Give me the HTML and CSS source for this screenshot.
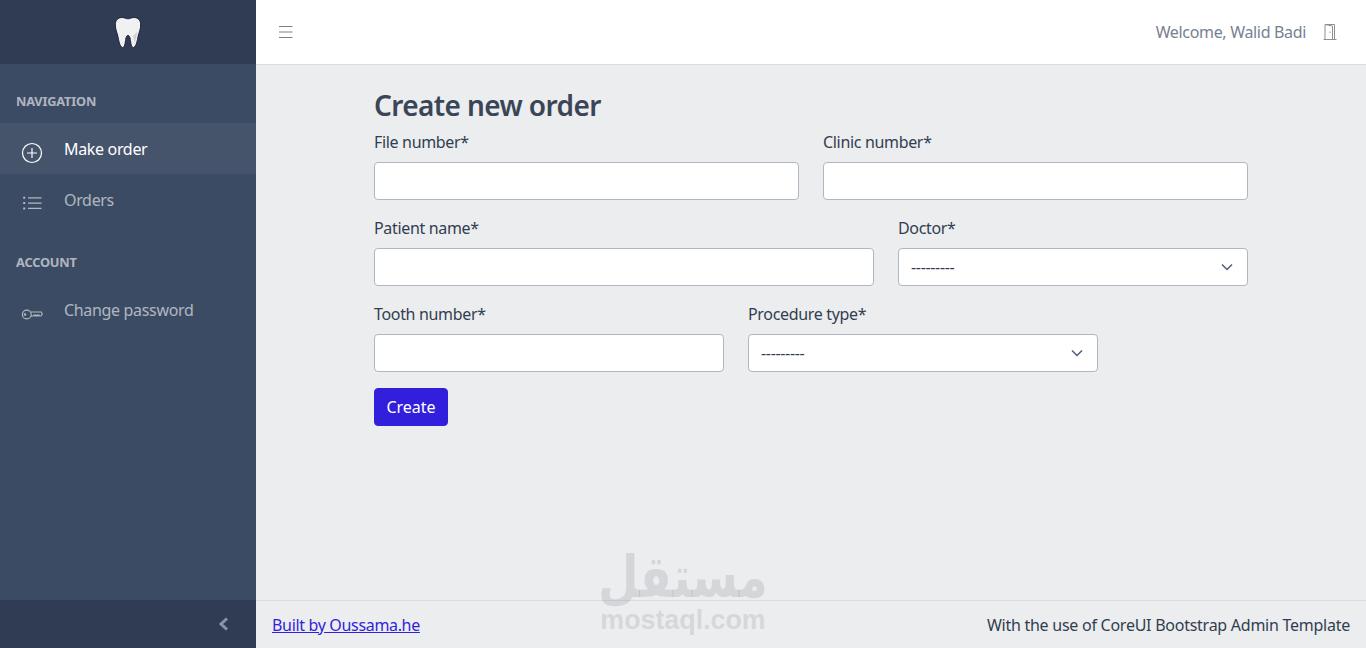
FILE: index.html
```html
<!DOCTYPE html>
<html lang="en">
<head>
<meta charset="utf-8">
<title>Create new order</title>
<link rel="stylesheet" href="styles.css">
</head>
<body>
<div class="app">
  <aside class="sidebar">
    <div class="brand">
      <svg class="tooth" width="28" height="33" viewBox="0 0 28 33"><path d="M8 1.500C3.800 1.500 1.200 4.500 1.300 9c.1 4 1.500 7 2.500 11 .9 4 1.700 10.500 4.700 11.500 2.300.3 2.700-5 3.200-8 .3-2 .8-4 2.300-4s2 2 2.300 4c.5 3 .9 8.300 3.200 8 3-1 3.800-7.500 4.700-11.500 1-4 2.400-7 2.500-11 .1-4.500-2.500-7.500-6.700-7.500-2.600 0-4 1.300-6 1.300S10.600 1.500 8 1.500z" fill="#eff1f2" stroke="#241f3d" stroke-width="1"/><path d="M19 20c1.500-2 3.500-3 4.500-5-.5 4-2 9-3 13-.3-3-.5-6-1.500-8z" fill="#cfd3d8"/></svg>
    </div>
    <nav class="nav">
      <div class="nav-title">Navigation</div>
      <a class="nav-link active" href="#">
        <span class="nav-icon"><svg width="22" height="22" viewBox="0 0 22 22" fill="none" stroke="currentColor" stroke-width="1.200"><circle cx="11" cy="11" r="9.500"/><path d="M11 6v10M6 11h10"/></svg></span>Make order
      </a>
      <a class="nav-link" href="#">
        <span class="nav-icon"><svg width="22" height="22" viewBox="0 0 22 22" fill="none" stroke="currentColor" stroke-width="1.200"><path d="M7 4.800h13.500M7 10.100h13.500M7 15.400h13.500"/><path d="M2.200 4.800h2M2.200 10.100h2M2.200 15.400h2" stroke-width="2"/></svg></span>Orders
      </a>
      <div class="nav-title">Account</div>
      <a class="nav-link" href="#">
        <span class="nav-icon"><svg width="22" height="22" viewBox="0 0 22 22" fill="none" stroke="currentColor" stroke-width="1.100"><circle cx="5.800" cy="11.500" r="4.400"/><circle cx="4" cy="11.500" r=".8"/><path d="M10 9h10.300l1 2-1.300 2h-1.300l-.8-1-.8 1-.8-1-.8 1-.8-1-.8 1-.8-1-.8 1H10"/></svg></span>Change password
      </a>
    </nav>
    <div class="sidebar-toggle">
      <svg width="14" height="14" viewBox="0 0 14 14" fill="none" stroke="currentColor" stroke-width="3"><path d="M10 1.500L4 7l6 5.500"/></svg>
    </div>
  </aside>
  <div class="wrapper">
    <header class="topbar">
      <svg class="burger" width="16" height="14" viewBox="0 0 16 14" fill="none" stroke="currentColor" stroke-width="1.200"><path d="M1 1.500h13.500M1 7h13.500M1 12.500h13.500"/></svg>
      <div class="account">
        <span>Welcome, Walid Badi</span>
        <svg class="door" width="16" height="18" viewBox="0 0 16 18" fill="none" stroke="currentColor" stroke-width="1"><path d="M1.500 16.500h13M3 16.500V1.500h9.500v15M3 1.500l7.500 1.500v13.500"/><path d="M8 8.500v1.500"/></svg>
      </div>
    </header>
    <main class="content">
      <h1 class="page-title">Create new order</h1>
      <form class="form">
        <div class="field half"><label>File number*</label><input type="text"></div>
        <div class="field half"><label>Clinic number*</label><input type="text"></div>
        <div class="field seven"><label>Patient name*</label><input type="text"></div>
        <div class="field five"><label>Doctor*</label><div class="select">---------<svg width="12" height="8" viewBox="0 0 12 8" fill="none" stroke="currentColor" stroke-width="1.500"><path d="M1 1.500l5 5 5-5"/></svg></div></div>
        <div class="field five"><label>Tooth number*</label><input type="text"></div>
        <div class="field five"><label>Procedure type*</label><div class="select">---------<svg width="12" height="8" viewBox="0 0 12 8" fill="none" stroke="currentColor" stroke-width="1.500"><path d="M1 1.500l5 5 5-5"/></svg></div></div>
        <div class="actions"><button type="button" class="btn">Create</button></div>
      </form>
    </main>
    <footer class="footer">
      <a href="#">Built by Oussama.he</a>
      <span class="credit">With the use of CoreUI Bootstrap Admin Template</span>
    </footer>
  </div>
</div>
<div class="watermark" aria-hidden="true">
  <div class="wm-ar" lang="ar" dir="rtl">مستقل</div>
  <div class="wm-en">mostaql.com</div>
</div>
</body>
</html>
```
FILE: styles.css
```css
* { box-sizing: border-box; }
html, body { margin: 0; height: 100%; }
body {
  font-family: "Noto Sans", "Open Sans", sans-serif;
  font-size: 16px;
  line-height: 24px;
  letter-spacing: -.33px;
  color: #323e50;
  background: #ebedef;
  overflow: hidden;
}
a { text-decoration: none; }

.app { display: flex; height: 648px; }

.sidebar {
  width: 256px;
  flex: none;
  display: flex;
  flex-direction: column;
  background: #3c4b64;
}
.brand {
  height: 64px;
  flex: none;
  display: flex;
  align-items: center;
  justify-content: center;
  background: #303c54;
}
.tooth { display: block; }
.nav { flex: 1; }
.nav-title {
  margin-top: 16px;
  padding: 12px 16px;
  font-size: 12.8px;
  line-height: 19.2px;
  font-weight: 700;
  letter-spacing: -.2px;
  text-transform: uppercase;
  color: rgba(255,255,255,.6);
}
.nav-link {
  display: flex;
  align-items: center;
  height: 51px;
  padding-left: 21px;
  color: rgba(255,255,255,.6);
}
.nav-link.active {
  color: #fff;
  background: rgba(255,255,255,.05);
}
.nav-icon {
  display: block;
  width: 43px;
  flex: none;
  height: 22px;
  position: relative;
  top: 4px;
}
.nav-icon svg { display: block; }
.sidebar-toggle {
  height: 48px;
  flex: none;
  display: flex;
  align-items: center;
  justify-content: flex-end;
  padding-right: 25px;
  background: #303c54;
  color: rgba(255,255,255,.45);
}

.wrapper {
  flex: 1;
  min-width: 0;
  display: flex;
  flex-direction: column;
}
.topbar {
  height: 65px;
  flex: none;
  display: flex;
  align-items: center;
  justify-content: space-between;
  padding: 0 28px 0 22px;
  background: #fff;
  border-bottom: 1px solid #d8dbe0;
  color: #768192;
}
.burger { display: block; }
.account { display: flex; align-items: center; gap: 16px; }
.door { display: block; color: #8d8f94; }

.content {
  flex: 1;
  width: 874px;
  margin: 0 auto;
  padding-top: 24px;
}
.page-title {
  margin: 0 0 8px;
  font-size: 28px;
  line-height: 33px;
  font-weight: 600;
  letter-spacing: -.6px;
  color: #3a4657;
}
.form { display: flex; flex-wrap: wrap; column-gap: 24px; }
.field { margin-bottom: 16px; }
.half { width: 425px; }
.seven { width: 500px; }
.five { width: 350px; }
.field label { display: block; margin-bottom: 8px; }
.field input, .select {
  display: block;
  width: 100%;
  height: 38px;
  background: #fff;
  border: 1px solid #b1b7c1;
  border-radius: 4px;
  font: inherit;
}
.select {
  display: flex;
  align-items: center;
  justify-content: space-between;
  padding: 0 14px 0 12px;
}
.select svg { color: #4f5d73; }
.actions { width: 100%; }
.btn {
  display: block;
  width: 74px;
  height: 38px;
  padding: 0;
  border: 1px solid #321fdb;
  border-radius: 4px;
  background: #321fdb;
  color: #fff;
  font: inherit;
  letter-spacing: 0;
}

.footer {
  height: 48px;
  flex: none;
  display: flex;
  align-items: center;
  justify-content: space-between;
  padding: 0 16px;
  border-top: 1px solid #d8dbe0;
  background: #ebedef;
}
.footer a { color: #321fdb; text-decoration: underline; }
.credit { letter-spacing: -.255px; }

.watermark {
  position: absolute;
  left: 600px;
  top: 549px;
  width: 166px;
  text-align: center;
  color: rgba(120,125,135,.2);
  font-weight: 700;
  letter-spacing: 0;
  pointer-events: none;
}
.wm-ar {
  display: flex;
  justify-content: center;
  font-family: "DejaVu Sans", sans-serif;
  font-size: 58px;
  line-height: 56px;
  white-space: nowrap;
  transform: scaleX(.8);
}
.wm-en {
  font-family: "Liberation Sans", sans-serif;
  font-size: 26.8px;
  line-height: 30px;
}
```
